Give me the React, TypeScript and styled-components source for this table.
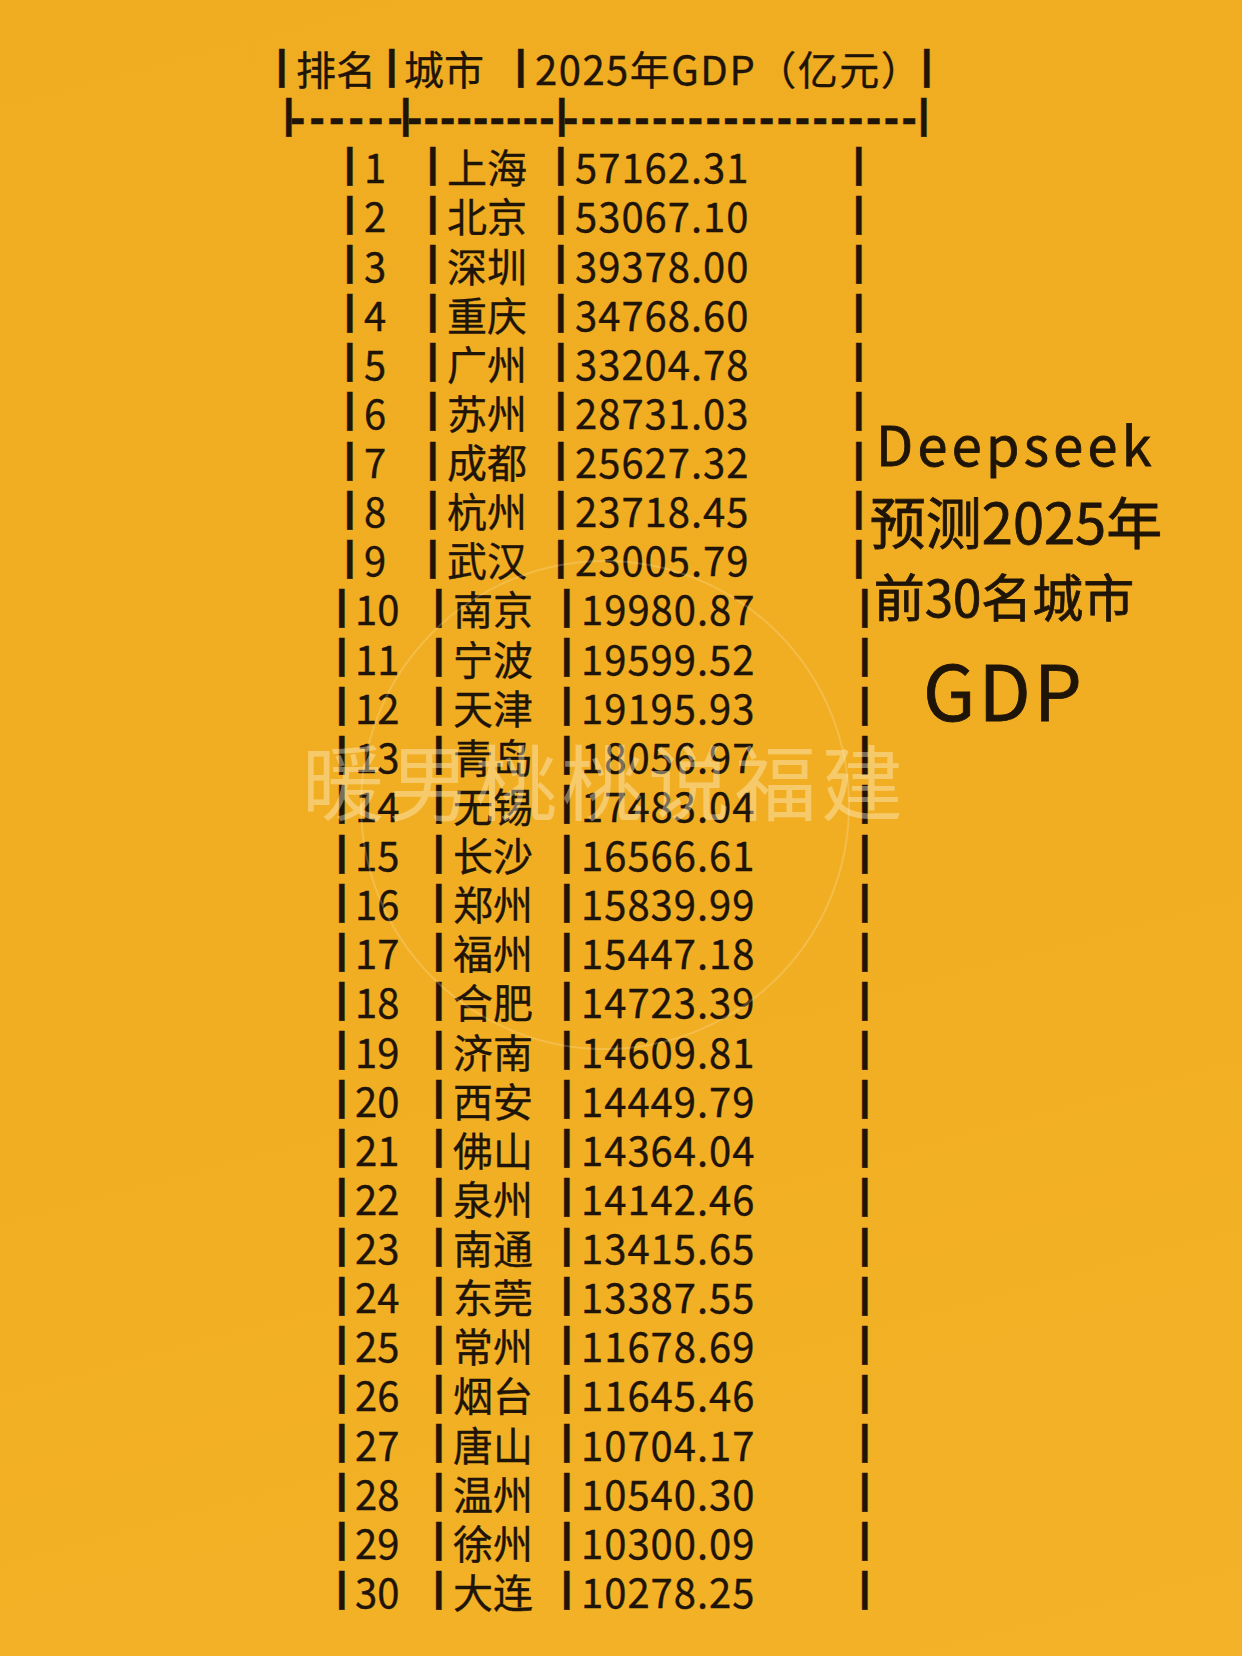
import React from 'react';
import styled, { createGlobalStyle } from 'styled-components';

type CityRow = { rank: number; city: string; gdp: string };

const rows: CityRow[] = [
  { rank: 1, city: '上海', gdp: '57162.31' },
  { rank: 2, city: '北京', gdp: '53067.10' },
  { rank: 3, city: '深圳', gdp: '39378.00' },
  { rank: 4, city: '重庆', gdp: '34768.60' },
  { rank: 5, city: '广州', gdp: '33204.78' },
  { rank: 6, city: '苏州', gdp: '28731.03' },
  { rank: 7, city: '成都', gdp: '25627.32' },
  { rank: 8, city: '杭州', gdp: '23718.45' },
  { rank: 9, city: '武汉', gdp: '23005.79' },
  { rank: 10, city: '南京', gdp: '19980.87' },
  { rank: 11, city: '宁波', gdp: '19599.52' },
  { rank: 12, city: '天津', gdp: '19195.93' },
  { rank: 13, city: '青岛', gdp: '18056.97' },
  { rank: 14, city: '无锡', gdp: '17483.04' },
  { rank: 15, city: '长沙', gdp: '16566.61' },
  { rank: 16, city: '郑州', gdp: '15839.99' },
  { rank: 17, city: '福州', gdp: '15447.18' },
  { rank: 18, city: '合肥', gdp: '14723.39' },
  { rank: 19, city: '济南', gdp: '14609.81' },
  { rank: 20, city: '西安', gdp: '14449.79' },
  { rank: 21, city: '佛山', gdp: '14364.04' },
  { rank: 22, city: '泉州', gdp: '14142.46' },
  { rank: 23, city: '南通', gdp: '13415.65' },
  { rank: 24, city: '东莞', gdp: '13387.55' },
  { rank: 25, city: '常州', gdp: '11678.69' },
  { rank: 26, city: '烟台', gdp: '11645.46' },
  { rank: 27, city: '唐山', gdp: '10704.17' },
  { rank: 28, city: '温州', gdp: '10540.30' },
  { rank: 29, city: '徐州', gdp: '10300.09' },
  { rank: 30, city: '大连', gdp: '10278.25' },
];

const LINE = 49.13;
const ink = '#1f1408';

const GlobalStyle = createGlobalStyle`
  html, body {
    margin: 0;
    padding: 0;
  }
  body {
    font-family: "Noto Sans CJK SC", "Noto Sans", sans-serif;
    color: ${ink};
  }
`;

const Page = styled.div`
  position: relative;
  width: 1242px;
  height: 1656px;
  overflow: hidden;
  padding-top: 44px;
  box-sizing: border-box;
  background: linear-gradient(165deg, #f0ad22 0%, #f1ae23 55%, #f3b227 100%);
  -webkit-text-stroke: 0.35px ${ink};
`;

const Line = styled.div<{ $offset: number; $cols: string }>`
  display: grid;
  grid-template-columns: ${(p) => p.$cols};
  grid-template-rows: ${LINE}px;
  margin-left: ${(p) => p.$offset}px;
  height: ${LINE}px;
  line-height: ${LINE}px;
  font-size: 40px;
  white-space: nowrap;
`;

const Cell = styled.div`
  display: flex;
  align-items: center;
  min-height: 0;
`;

// the bar glyph of Liberation Sans is shorter than the CJK one, so rows keep their gaps
const Pipe = styled.span<{ $w?: number }>`
  display: inline-block;
  flex: none;
  width: ${(p) => p.$w ?? 20}px;
  margin-bottom: 7px;
  font-family: "Liberation Sans", Arial, sans-serif;
  font-size: 41px;
  font-weight: 700;
`;

const Dashes = styled.span<{ $spacing: number }>`
  font-family: "Liberation Sans", Arial, sans-serif;
  font-size: 46px;
  font-weight: 700;
  letter-spacing: ${(p) => p.$spacing}px;
`;

const Spaced = styled.span<{ $spacing: number }>`
  letter-spacing: ${(p) => p.$spacing}px;
`;

const Body = styled.div`
  display: flex;
`;

const Rows = styled.div`
  flex: none;
  width: 866px;
`;

const Caption = styled.div`
  flex: none;
  width: 300px;
  padding-top: 262px;
  display: flex;
  flex-direction: column;
  align-items: center;
  white-space: nowrap;
  -webkit-text-stroke: 0.8px ${ink};
`;

const CaptionLine = styled.div<{ $size: number; $lh: number; $spacing?: number; $shift?: number }>`
  font-size: ${(p) => p.$size}px;
  line-height: ${(p) => p.$lh}px;
  letter-spacing: ${(p) => p.$spacing ?? 0}px;
  margin-right: ${(p) => p.$shift ?? 0}px;
`;

const Watermark = styled.div`
  position: absolute;
  left: 302px;
  top: 738px;
  font-size: 82px;
  line-height: 1;
  letter-spacing: 4.5px;
  color: rgba(255, 244, 214, 0.4);
  -webkit-text-stroke: 0;
  white-space: nowrap;
  pointer-events: none;
`;

const Ring = styled.div`
  position: absolute;
  left: 360px;
  top: 560px;
  width: 490px;
  height: 490px;
  border-radius: 50%;
  border: 2px solid rgba(255, 240, 205, 0.22);
  box-sizing: border-box;
  pointer-events: none;
`;

// pipe-to-pipe distances for each kind of line
const headCols = '110px 129px 406px auto';
const dashCols = '117px 156px 362px auto';
const topCols = '83px 128px 298px auto';
const lowCols = '97px 128px 298px auto';

const TableRow: React.FC<{ row: CityRow }> = ({ row }) => {
  const low = row.rank >= 10;
  return (
    <Line $offset={low ? 336 : 344} $cols={low ? lowCols : topCols}>
      <Cell><Pipe $w={low ? 19 : 20}>|</Pipe>{row.rank}</Cell>
      <Cell><Pipe>|</Pipe>{row.city}</Cell>
      <Cell><Pipe>|</Pipe><Spaced $spacing={1}>{row.gdp}</Spaced></Cell>
      <Cell><Pipe>|</Pipe></Cell>
    </Line>
  );
};

export default function App() {
  return (
    <>
      <GlobalStyle />
      <Page>
        <Line $offset={276} $cols={headCols}>
          <Cell><Pipe $w={20}>|</Pipe>排名</Cell>
          <Cell><Pipe $w={18}>|</Pipe>城市</Cell>
          <Cell><Pipe $w={20}>|</Pipe><Spaced $spacing={1.5}>2025年GDP（亿元）</Spaced></Cell>
          <Cell><Pipe>|</Pipe></Cell>
        </Line>
        <Line $offset={283} $cols={dashCols}>
          <Cell><Pipe $w={7}>|</Pipe><Dashes $spacing={4.2}>------</Dashes></Cell>
          <Cell><Pipe $w={7}>|</Pipe><Dashes $spacing={1.2}>---------</Dashes></Cell>
          <Cell><Pipe $w={7}>|</Pipe><Dashes $spacing={2.5}>--------------------</Dashes></Cell>
          <Cell><Pipe>|</Pipe></Cell>
        </Line>
        <Body>
          <Rows>
            {rows.map((r) => (
              <TableRow key={r.rank} row={r} />
            ))}
          </Rows>
          <Caption>
            <CaptionLine $size={54} $lh={78} $spacing={4.3}>Deepseek</CaptionLine>
            <CaptionLine $size={56} $lh={76}>预测2025年</CaptionLine>
            <CaptionLine $size={51} $lh={74} $shift={24}>前30名城市</CaptionLine>
            <CaptionLine $size={76} $lh={112} $spacing={3} $shift={24}>GDP</CaptionLine>
          </Caption>
        </Body>
        <Ring />
        <Watermark>暖男桃桃说福建</Watermark>
      </Page>
    </>
  );
}
